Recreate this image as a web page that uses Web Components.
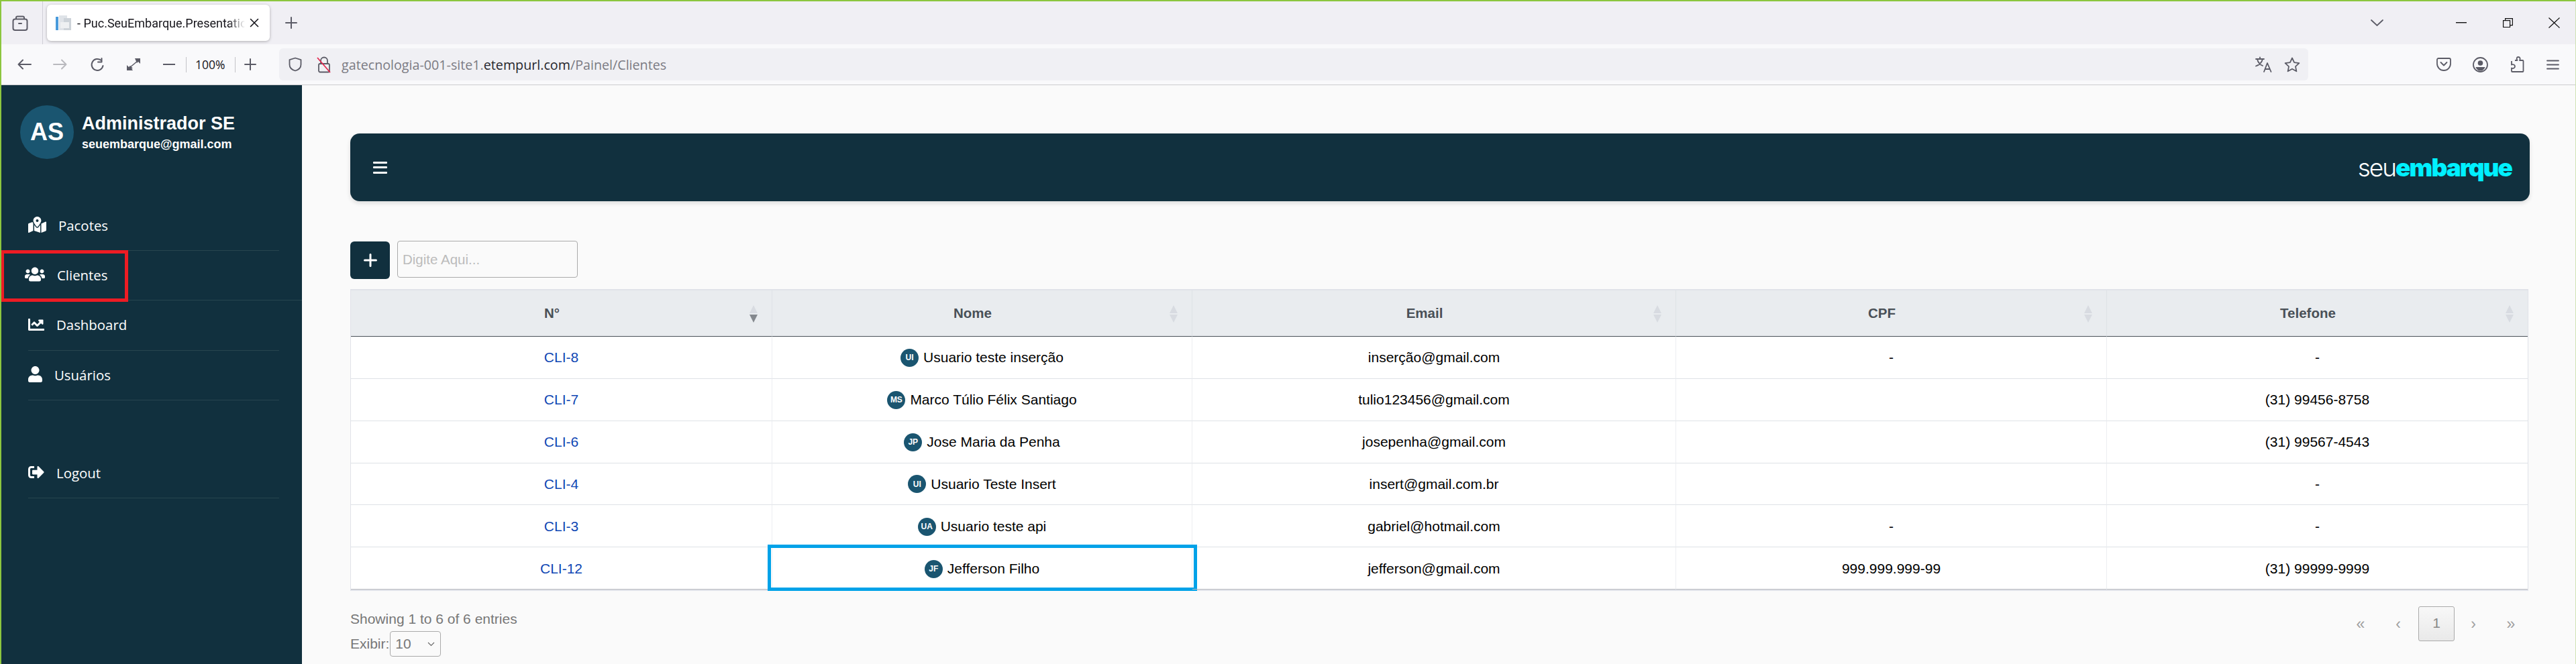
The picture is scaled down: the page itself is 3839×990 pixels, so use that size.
<!DOCTYPE html>
<html lang="pt-BR">
<head>
<meta charset="utf-8">
<title>Puc.SeuEmbarque.Presentation</title>
<style>
html, body { margin: 0; padding: 0; width: 3839px; height: 990px; overflow: hidden; background: #fafafa; }
</style>
</head>
<body>
<app-shell>
  <browser-chrome slot="chrome"></browser-chrome>
  <side-bar slot="side" name="Administrador SE" email="seuembarque@gmail.com" initials="AS">
    <nav-item icon="map">Pacotes</nav-item>
    <nav-item icon="users" wide highlight>Clientes</nav-item>
    <nav-item icon="chart" tall>Dashboard</nav-item>
    <nav-item icon="user">Usuários</nav-item>
    <nav-item icon="logout" spaced>Logout</nav-item>
  </side-bar>
  <top-bar></top-bar>
  <search-row></search-row>
  <client-table></client-table>
  <table-footer></table-footer>
</app-shell>

<script>
const ICONS = {
  map: ["0 0 576 512", "M288 0c-69.59 0-126 56.41-126 126 0 56.26 82.35 158.8 113.9 196.02 6.39 7.54 17.82 7.54 24.2 0C331.65 284.8 414 182.26 414 126 414 56.41 357.59 0 288 0zm0 168c-23.2 0-42-18.8-42-42s18.8-42 42-42 42 18.8 42 42-18.8 42-42 42zM20.12 215.95A32.006 32.006 0 0 0 0 245.66v250.32c0 11.32 11.43 19.06 21.94 14.86L160 448V214.92c-8.84-15.98-16.07-31.54-21.25-46.42L20.12 215.95zM288 359.67c-14.07 0-27.38-6.18-36.51-16.96-19.66-23.2-40.57-49.62-59.49-76.72v182l192 64V266c-18.92 27.09-39.82 53.52-59.49 76.72-9.13 10.77-22.44 16.95-36.51 16.95zm266.06-198.51L416 224v288l139.88-55.95A31.996 31.996 0 0 0 576 426.34V176.02c0-11.32-11.43-19.06-21.94-14.86z"],
  users: ["0 0 640 512", "M96 224c35.3 0 64-28.7 64-64s-28.7-64-64-64-64 28.7-64 64 28.7 64 64 64zm448 0c35.3 0 64-28.7 64-64s-28.7-64-64-64-64 28.7-64 64 28.7 64 64 64zm32 32h-64c-17.6 0-33.5 7.1-45.1 18.6 40.3 22.1 68.9 62 75.1 109.4h66c17.7 0 32-14.3 32-32v-32c0-35.3-28.7-64-64-64zm-256 0c61.9 0 112-50.1 112-112S381.9 32 320 32 208 82.1 208 144s50.1 112 112 112zm76.8 32h-8.3c-20.8 10-43.9 16-68.5 16s-47.6-6-68.5-16h-8.3C179.6 288 128 339.6 128 403.2V432c0 26.5 21.5 48 48 48h288c26.5 0 48-21.5 48-48v-28.8c0-63.6-51.6-115.2-115.2-115.2zm-223.7-13.4C161.5 263.1 145.6 256 128 256H64c-35.3 0-64 28.7-64 64v32c0 17.7 14.3 32 32 32h65.9c6.3-47.4 34.9-87.3 75.2-109.4z"],
  chart: ["0 0 512 512", "M496 384H64V80c0-8.84-7.16-16-16-16H16C7.16 64 0 71.16 0 80v336c0 17.67 14.33 32 32 32h464c8.84 0 16-7.16 16-16v-32c0-8.84-7.16-16-16-16zM464 96H345.94c-21.38 0-32.09 25.85-16.97 40.97l32.4 32.4L288 242.75l-73.37-73.37c-12.5-12.5-32.76-12.5-45.25 0l-68.69 68.69c-6.25 6.25-6.25 16.38 0 22.63l22.62 22.62c6.25 6.25 16.38 6.25 22.63 0L192 237.25l73.37 73.37c12.5 12.5 32.76 12.5 45.25 0l96-96 32.4 32.4c15.12 15.12 40.97 4.41 40.97-16.97V112c.01-8.84-7.15-16-15.99-16z"],
  user: ["0 0 448 512", "M224 256c70.7 0 128-57.3 128-128S294.7 0 224 0 96 57.3 96 128s57.3 128 128 128zm89.6 32h-16.7c-22.2 10.2-46.9 16-72.9 16s-50.6-5.8-72.9-16h-16.7C60.2 288 0 348.2 0 422.4V464c0 26.5 21.5 48 48 48h352c26.5 0 48-21.5 48-48v-41.6c0-74.2-60.2-134.4-134.4-134.4z"],
  logout: ["0 0 512 512", "M497 273L329 441c-15 15-41 4.5-41-17v-96H152c-13.3 0-24-10.7-24-24v-96c0-13.3 10.7-24 24-24h136V88c0-21.4 25.9-32 41-17l168 168c9.3 9.4 9.3 24.6 0 34zM192 436v-40c0-6.6-5.4-12-12-12H96c-17.7 0-32-14.3-32-32V160c0-17.7 14.3-32 32-32h84c6.6 0 12-5.4 12-12V76c0-6.6-5.4-12-12-12H96c-53 0-96 43-96 96v192c0 53 43 96 96 96h84c6.6 0 12-5.4 12-12z"],
};

const CLIENTS = [
  { id: "CLI-8", ini: "UI", name: "Usuario teste inserção", email: "inserção@gmail.com", cpf: "-", phone: "-" },
  { id: "CLI-7", ini: "MS", name: "Marco Túlio Félix Santiago", email: "tulio123456@gmail.com", cpf: "", phone: "(31) 99456-8758" },
  { id: "CLI-6", ini: "JP", name: "Jose Maria da Penha", email: "josepenha@gmail.com", cpf: "", phone: "(31) 99567-4543" },
  { id: "CLI-4", ini: "UI", name: "Usuario Teste Insert", email: "insert@gmail.com.br", cpf: "", phone: "-", short: true },
  { id: "CLI-3", ini: "UA", name: "Usuario teste api", email: "gabriel@hotmail.com", cpf: "-", phone: "-" },
  { id: "CLI-12", ini: "JF", name: "Jefferson Filho", email: "jefferson@gmail.com", cpf: "999.999.999-99", phone: "(31) 99999-9999", focus: true },
];

class AppShell extends HTMLElement {
  constructor() {
    super();
    this.attachShadow({ mode: "open" }).innerHTML = `
      <style>
        :host { display: block; width: 3839px; height: 990px; box-sizing: border-box; overflow: hidden;
          border-top: 2px solid #8cc63f; border-left: 2px solid #8cc63f; border-right: 1px solid #cfe3b4; }
        .body { display: flex; height: 863px; }
        main { flex: 1; min-width: 0; box-sizing: border-box; background: #fafafa; padding: 72px 68px 0 72px; }
      </style>
      <slot name="chrome"></slot>
      <div class="body">
        <slot name="side"></slot>
        <main><slot></slot></main>
      </div>`;
  }
}

class BrowserChrome extends HTMLElement {
  constructor() {
    super();
    const s = 'fill="none" stroke="#5b5b66" stroke-width="2" stroke-linecap="round" stroke-linejoin="round"';
    this.attachShadow({ mode: "open" }).innerHTML = `
      <style>
        :host { display: block; font-family: "Open Sans", "Noto Sans", sans-serif; color: #15141a; }
        svg { display: block; flex: none; }
        .tabs { height: 64px; background: #f0eff4; display: flex; align-items: center; position: relative; }
        .tabs > svg.view { margin-left: 16px; }
        .sep { width: 1px; height: 64px; background: #cfcfd6; margin-left: 21px; }
        .tab { width: 332px; height: 54px; margin-left: 6px; background: #fff; border-radius: 6px;
          box-shadow: 0 1px 4px rgba(0,0,0,.28); display: flex; align-items: center; box-sizing: border-box; padding-left: 13px; }
        /* the tab title runs under the close button and fades out before it */
        .title { width: 280px; margin-left: 9px; margin-right: -29px; font: 18px Roboto, sans-serif; white-space: nowrap;
          -webkit-mask-image: linear-gradient(to right, #000 226px, transparent 250px); mask-image: linear-gradient(to right, #000 226px, transparent 250px); }
        .tab svg.x { margin-left: 6px; }
        .spacer { flex: 1; }
        .tools { height: 60px; background: #f9f9fb; display: flex; align-items: center; border-bottom: 1px solid #cccccf; }
        .div { width: 1px; height: 23px; background: #c4c4c8; flex: none; }
        .zoom { font-size: 17.500px; width: 43px; margin-left: 13px; margin-right: 16px; white-space: nowrap; }
        .url { width: 3024px; height: 48px; margin-left: 34px; background: #f0f0f4; border-radius: 6px; display: flex; align-items: center; flex: none; }
        .addr { font-size: 19.700px; color: #7b7b83; margin-left: 15px; white-space: nowrap; }
        .addr b { font-weight: 400; color: #26262c; }
      </style>
      <div class="tabs">
        <svg class="view" width="24" height="23" viewBox="0 0 24 23" ${s}><path d="M6 5V3.6C6 2.4 7 1.5 8 1.5h8c1 0 2 .9 2 2.1V5"/><rect x="1.5" y="5.5" width="21" height="16.5" rx="3"/><path d="M10 12h4"/></svg>
        <div class="sep"></div>
        <div class="tab">
          <svg width="23" height="24" viewBox="0 0 23 24"><rect x="0" y="3" width="4" height="20" fill="#4a9bdc"/><rect x="5" y="1" width="12" height="22" fill="#dfe3e8"/><rect x="12" y="5" width="11" height="18" fill="#cdd3d9"/><rect x="7" y="11" width="13" height="9" fill="#eef0f2"/></svg>
          <div class="title">- Puc.SeuEmbarque.Presentation</div>
          <svg class="x" width="14" height="14" viewBox="0 0 14 14" fill="none" stroke="#15141a" stroke-width="1.6" stroke-linecap="round"><path d="M1.5 1.5l11 11M12.5 1.5l-11 11"/></svg>
        </div>
        <svg style="margin-left:23px" width="18" height="18" viewBox="0 0 18 18" ${s}><path d="M9 1v16M1 9h16"/></svg>
        <div class="spacer"></div>
        <svg width="19" height="10" viewBox="0 0 19 10" fill="none" stroke="#5b5b66" stroke-width="1.8" stroke-linecap="round"><path d="M1 1l8.5 8L18 1"/></svg>
        <svg style="margin-left:108px" width="16" height="2" viewBox="0 0 16 2"><rect width="16" height="1.4" fill="#111"/></svg>
        <svg style="margin-left:54px" width="15" height="14" viewBox="0 0 15 14" fill="none" stroke="#111" stroke-width="1.2"><rect x=".6" y="3.6" width="10" height="10"/><path d="M3.6 3.6V.6h10.8v10h-3.8"/></svg>
        <svg style="margin-left:53px;margin-right:23px" width="17" height="16" viewBox="0 0 17 16" fill="none" stroke="#111" stroke-width="1.2"><path d="M.5.5l16 15M16.500.5l-16 15"/></svg>
      </div>
      <div class="tools">
        <svg style="margin-left:24px" width="21" height="16" viewBox="0 0 21 16" ${s}><path d="M20 8H1.500M8 1.500L1.500 8 8 14.500"/></svg>
        <svg style="margin-left:32px" width="21" height="16" viewBox="0 0 21 16" fill="none" stroke="#b9b9be" stroke-width="2" stroke-linecap="round" stroke-linejoin="round"><path d="M1 8h18.500M13 1.500L19.500 8 13 14.500"/></svg>
        <svg style="margin-left:34px" width="22" height="21" viewBox="0 0 22 21" ${s}><path d="M19.500 12a8.500 8.500 0 1 1-3-8.200"/><path d="M17.500 1v5.500H12"/></svg>
        <svg style="margin-left:32px" width="22" height="20" viewBox="0 0 22 20" fill="#5b5b66"><path d="M13 1h8v8l-3-3-2 2zM1 19v-8l3 3 2-2 4 4-2 0 2 3z"/><path d="M5 15L17 5" stroke="#5b5b66" stroke-width="1.500"/></svg>
        <svg style="margin-left:33px" width="18" height="2" viewBox="0 0 18 2"><rect width="18" height="2" fill="#5b5b66"/></svg>
        <div class="div" style="margin-left:16px"></div>
        <div class="zoom">100%</div>
        <div class="div"></div>
        <svg style="margin-left:13px" width="18" height="18" viewBox="0 0 18 18" ${s}><path d="M9 1v16M1 9h16"/></svg>
        <div class="url">
          <svg style="margin-left:13px" width="22" height="22" viewBox="0 0 22 22" fill="none" stroke="#5b5b66" stroke-width="1.800" stroke-linejoin="round"><path d="M11 1.500l8.500 2.700v7c0 4.500-3.600 7.900-8.500 9.300-4.900-1.400-8.500-4.800-8.500-9.300v-7z"/></svg>
          <svg style="margin-left:21px" width="22" height="25" viewBox="0 0 22 25" fill="none"><path d="M6 11V6.500a5 5 0 0 1 10 0V11" stroke="#5b5b66" stroke-width="1.800"/><rect x="3" y="11" width="16" height="12.500" rx="2" stroke="#5b5b66" stroke-width="1.800"/><path d="M1 2l19 22" stroke="#e22850" stroke-width="1.800"/></svg>
          <div class="addr">gatecnologia-001-site1.<b>etempurl.com</b>/Painel/Clientes</div>
          <div class="spacer"></div>
          <svg width="25" height="24" viewBox="0 0 25 24" fill="none" stroke="#5b5b66" stroke-width="1.800" stroke-linecap="round" stroke-linejoin="round"><path d="M1 4h12M7 1.500V4M3 4c1 5 4.500 8.500 8 10M11 4c-1 4.500-4.500 8.500-10 10.500"/><path d="M13 23l5-13 5.500 13M14.800 19h7"/></svg>
          <svg style="margin-left:18px;margin-right:12px" width="24" height="23" viewBox="0 0 24 23" fill="none" stroke="#5b5b66" stroke-width="1.800" stroke-linejoin="round"><path d="M12 1.500l3.100 6.700 7.300.9-5.400 5 1.400 7.200-6.400-3.600-6.400 3.600L7 14.100l-5.400-5 7.300-.9z"/></svg>
        </div>
        <div class="spacer"></div>
        <svg width="22" height="20" viewBox="0 0 22 20" fill="none" stroke="#5b5b66" stroke-width="1.800" stroke-linecap="round" stroke-linejoin="round"><path d="M3 1h16a2 2 0 0 1 2 2v6a10 10 0 0 1-20 0V3a2 2 0 0 1 2-2z"/><path d="M6.500 7l4.500 4.500L15.500 7"/></svg>
        <svg style="margin-left:32px" width="23" height="23" viewBox="0 0 23 23"><circle cx="11.500" cy="11.500" r="10.500" fill="none" stroke="#5b5b66" stroke-width="1.800"/><circle cx="11.500" cy="9" r="3.800" fill="#5b5b66"/><path d="M4.500 15h14c-1 3.500-4 5.500-7 5.500s-6-2-7-5.500z" fill="#5b5b66"/></svg>
        <svg style="margin-left:32px" width="22" height="24" viewBox="0 0 22 24" fill="none" stroke="#5b5b66" stroke-width="1.800" stroke-linejoin="round"><path d="M8 6h3.500C10 3.500 10.500 1 13 1s3.500 2.500 2 5h4.500a1 1 0 0 1 1 1v15a1 1 0 0 1-1 1H4a1 1 0 0 1-1-1v-4.500c2.500 1.200 5-.2 5-2.500s-2.500-3.700-5-2.500V7"/></svg>
        <svg style="margin-left:33px;margin-right:24px" width="19" height="15" viewBox="0 0 19 15" fill="none" stroke="#5b5b66" stroke-width="1.800" stroke-linecap="round"><path d="M1 1.500h17M1 7.500h17M1 13.500h17"/></svg>
      </div>`;
  }
}

class SideBar extends HTMLElement {
  constructor() {
    super();
    this.attachShadow({ mode: "open" }).innerHTML = `
      <style>
        :host { display: block; width: 448px; height: 100%; flex: none; background: #11303e; color: #fff; box-sizing: border-box; padding-top: 30px; position: relative; }
        .me { display: flex; gap: 12px; padding-left: 28px; font-family: "Liberation Sans", Arial, sans-serif; font-weight: 700; }
        .av { width: 80px; height: 80px; border-radius: 50%; background: #1a5570; display: flex; align-items: center; justify-content: center; font-size: 36px; flex: none; }
        .name { font-size: 27px; line-height: 32px; margin-top: 11px; }
        .email { font-size: 18px; line-height: 24px; margin-top: 3px; }
        nav { margin-top: 63px; }
      </style>
      <div class="me">
        <div class="av"></div>
        <div><div class="name"></div><div class="email"></div></div>
      </div>
      <nav><slot></slot></nav>`;
    const root = this.shadowRoot;
    root.querySelector(".av").textContent = this.getAttribute("initials");
    root.querySelector(".name").textContent = this.getAttribute("name");
    root.querySelector(".email").textContent = this.getAttribute("email");
  }
}

class NavItem extends HTMLElement {
  constructor() {
    super();
    const [box, d] = ICONS[this.getAttribute("icon")];
    const w = Number(box.split(" ")[2]) * 24 / 512;
    this.attachShadow({ mode: "open" }).innerHTML = `
      <style>
        :host { display: flex; box-sizing: border-box; height: 74px; margin: 0 34px 0 40px; align-items: center; gap: 18px;
          border-bottom: 1px solid #27454f; font: 20.4px "Open Sans", "Noto Sans", sans-serif; color: #fff; position: relative; }
        :host([wide]) { margin-right: 0; }
        :host([tall]) { height: 75px; }
        :host([spaced]) { margin-top: 72px; }
        :host([icon="users"]) svg { margin-left: -5px; }
        svg { flex: none; display: block; margin-top: -3px; }
        span { margin-top: -2px; }
        .mark { display: none; position: absolute; left: -41px; top: -1px; width: 190px; height: 77px; box-sizing: border-box; border: 5px solid #ed1c24; }
        :host([highlight]) .mark { display: block; }
      </style>
      <svg width="${w}" height="24" viewBox="${box}" fill="#fff"><path d="${d}"/></svg>
      <span><slot></slot></span>
      <div class="mark"></div>`;
  }
}

class TopBar extends HTMLElement {
  constructor() {
    super();
    this.attachShadow({ mode: "open" }).innerHTML = `
      <style>
        :host { display: flex; height: 101px; align-items: center; justify-content: space-between; background: #11303e; border-radius: 14px;
          box-shadow: 0 3px 6px rgba(0,0,0,.12); padding: 0 27px 0 34px; }
        .bars { width: 21px; display: flex; flex-direction: column; gap: 4.500px; }
        .bars i { display: block; height: 3px; background: #fff; border-radius: 1px; }
        .logo { font: 300 37px Inter, "Open Sans", sans-serif; letter-spacing: -2px; color: #fff; white-space: nowrap; }
        .logo b { font-weight: 900; color: #00f0ff; }
      </style>
      <div class="bars"><i></i><i></i><i></i></div>
      <div class="logo">seu<b>embarque</b></div>`;
  }
}

class SearchRow extends HTMLElement {
  constructor() {
    super();
    this.attachShadow({ mode: "open" }).innerHTML = `
      <style>
        :host { display: flex; margin-top: 60px; gap: 11px; align-items: flex-start; height: 56px; }
        .add { width: 59px; height: 56px; background: #11303e; border-radius: 6px; display: flex; align-items: center; justify-content: center; }
        .field { width: 269px; height: 55px; margin-top: -1px; box-sizing: border-box; border: 1px solid #aaa; border-radius: 4px; padding-left: 7px;
          display: flex; align-items: center; font: 20.500px "Liberation Sans", Arial, sans-serif; color: #bcbcbc; background: #fafafa; }
      </style>
      <div class="add"><svg width="20" height="20" viewBox="0 0 20 20" stroke="#fff" stroke-width="3" stroke-linecap="round"><path d="M10 1.500v17M1.500 10h17"/></svg></div>
      <div class="field">Digite Aqui...</div>`;
  }
}

class UserBadge extends HTMLElement {
  constructor() {
    super();
    this.attachShadow({ mode: "open" }).innerHTML = `
      <style>
        :host { display: inline-flex; width: 27px; height: 27px; border-radius: 50%; background: #1a5570; color: #fff; align-items: center; justify-content: center;
          font: 700 12px "Liberation Sans", Arial, sans-serif; vertical-align: middle; }
      </style>
      <slot></slot>`;
  }
}

class ClientTable extends HTMLElement {
  constructor() {
    super();
    const heads = ["N°", "Nome", "Email", "CPF", "Telefone"];
    const th = heads.map((h, i) => `<th>${h}<span class="sort ${i === 0 ? "on" : ""}"><i></i><i></i></span></th>`).join("");
    const rows = CLIENTS.map((c) => `
      <tr class="${c.short ? "short" : ""}">
        <td><a>${c.id}</a></td>
        <td class="${c.focus ? "focus" : ""}"><user-badge>${c.ini}</user-badge><span class="nm">${c.name}</span></td>
        <td>${c.email}</td>
        <td>${c.cpf}</td>
        <td>${c.phone}</td>
      </tr>`).join("");
    this.attachShadow({ mode: "open" }).innerHTML = `
      <style>
        :host { display: block; margin-top: 15px; font: 21px "Liberation Sans", Arial, sans-serif; color: #000; }
        table { width: 3246px; table-layout: fixed; border-collapse: separate; border-spacing: 0; background: #fff;
          border: 2px solid #e0e2e9; border-width: 2px 1px 2px 1px; }
        th { height: 68px; box-sizing: content-box; padding: 0 28px 0 0; background: #e9ecef; color: #495057; font-size: 20.500px; font-weight: 700;
          border-bottom: 1px solid #495057; border-right: 1px solid #dee2e6; position: relative; }
        td { height: 62px; padding: 0; text-align: center; border-bottom: 1px solid #dee2e6; border-right: 1px solid #eceef1; white-space: nowrap; position: relative; }
        tr.short td { height: 61px; }
        tr:nth-child(n+5) td { height: 60px; padding-top: 2px; }
        tr:last-child td { border-bottom-color: #b8bbc0; }
        th:last-child, td:last-child { border-right: 0; }
        a { color: #0f47b4; }
        .nm { margin-left: 7px; vertical-align: middle; }
        .sort { position: absolute; right: 21px; top: 22px; display: flex; flex-direction: column; gap: 2px; }
        .sort i { display: block; width: 0; height: 0; border: 6.500px solid transparent; border-top: 0; border-bottom: 12px solid #d8dbe1; }
        .sort i + i { border-bottom: 0; border-top: 12px solid #d8dbe1; }
        .sort.on i + i { border-top-color: #84888e; }
        .focus::after { content: ""; position: absolute; left: -7px; right: -8px; top: -4px; bottom: -3px; border: 5px solid #00a2e8; pointer-events: none; }
      </style>
      <table>
        <colgroup><col style="width:628px"><col style="width:626px"><col style="width:721px"><col style="width:642px"><col style="width:627px"></colgroup>
        <thead><tr>${th}</tr></thead>
        <tbody>${rows}</tbody>
      </table>`;
  }
}

class TableFooter extends HTMLElement {
  constructor() {
    super();
    const cells = ["«", "‹", "1", "›", "»"].map((p, i) => `<div class="pg ${i === 2 ? "cur" : ""}">${p}</div>`).join("");
    this.attachShadow({ mode: "open" }).innerHTML = `
      <style>
        :host { display: flex; justify-content: space-between; align-items: flex-start; padding-top: 23px;
          font: 21px "Liberation Sans", Arial, sans-serif; color: #777; }
        .info { line-height: 30px; padding-top: 4px; }
        .len { display: flex; align-items: center; height: 38px; margin-top: 3px; color: #777; }
        .sel { width: 76px; height: 38px; box-sizing: border-box; border: 1px solid #aaa; border-radius: 4px; display: flex; align-items: center; justify-content: space-between;
          padding: 0 8px 0 7px; margin-left: 1px; color: #777; }
        .pager { display: flex; align-items: center; height: 52px; }
        .pg { width: 56px; height: 52px; display: flex; align-items: center; justify-content: center; color: #a0a0a0; font-size: 23px; box-sizing: border-box; }
        .pg:nth-child(-n+2) { padding-right: 4px; }
        .cur { width: 54px; padding-bottom: 2px; font-size: 21px; color: #888; border: 1px solid #aaa; border-radius: 3px; background: linear-gradient(#f8f8f8, #e9e9e9); }
      </style>
      <div class="info">
        <div>Showing 1 to 6 of 6 entries</div>
        <div class="len">Exibir:<div class="sel"><span>10</span><svg width="11" height="7" viewBox="0 0 11 7" fill="none" stroke="#666" stroke-width="1.100"><path d="M1 1l4.500 4.500L10 1"/></svg></div></div>
      </div>
      <div class="pager">${cells}</div>`;
  }
}

customElements.define("app-shell", AppShell);
customElements.define("browser-chrome", BrowserChrome);
customElements.define("side-bar", SideBar);
customElements.define("nav-item", NavItem);
customElements.define("top-bar", TopBar);
customElements.define("search-row", SearchRow);
customElements.define("user-badge", UserBadge);
customElements.define("client-table", ClientTable);
customElements.define("table-footer", TableFooter);
</script>
</body>
</html>
